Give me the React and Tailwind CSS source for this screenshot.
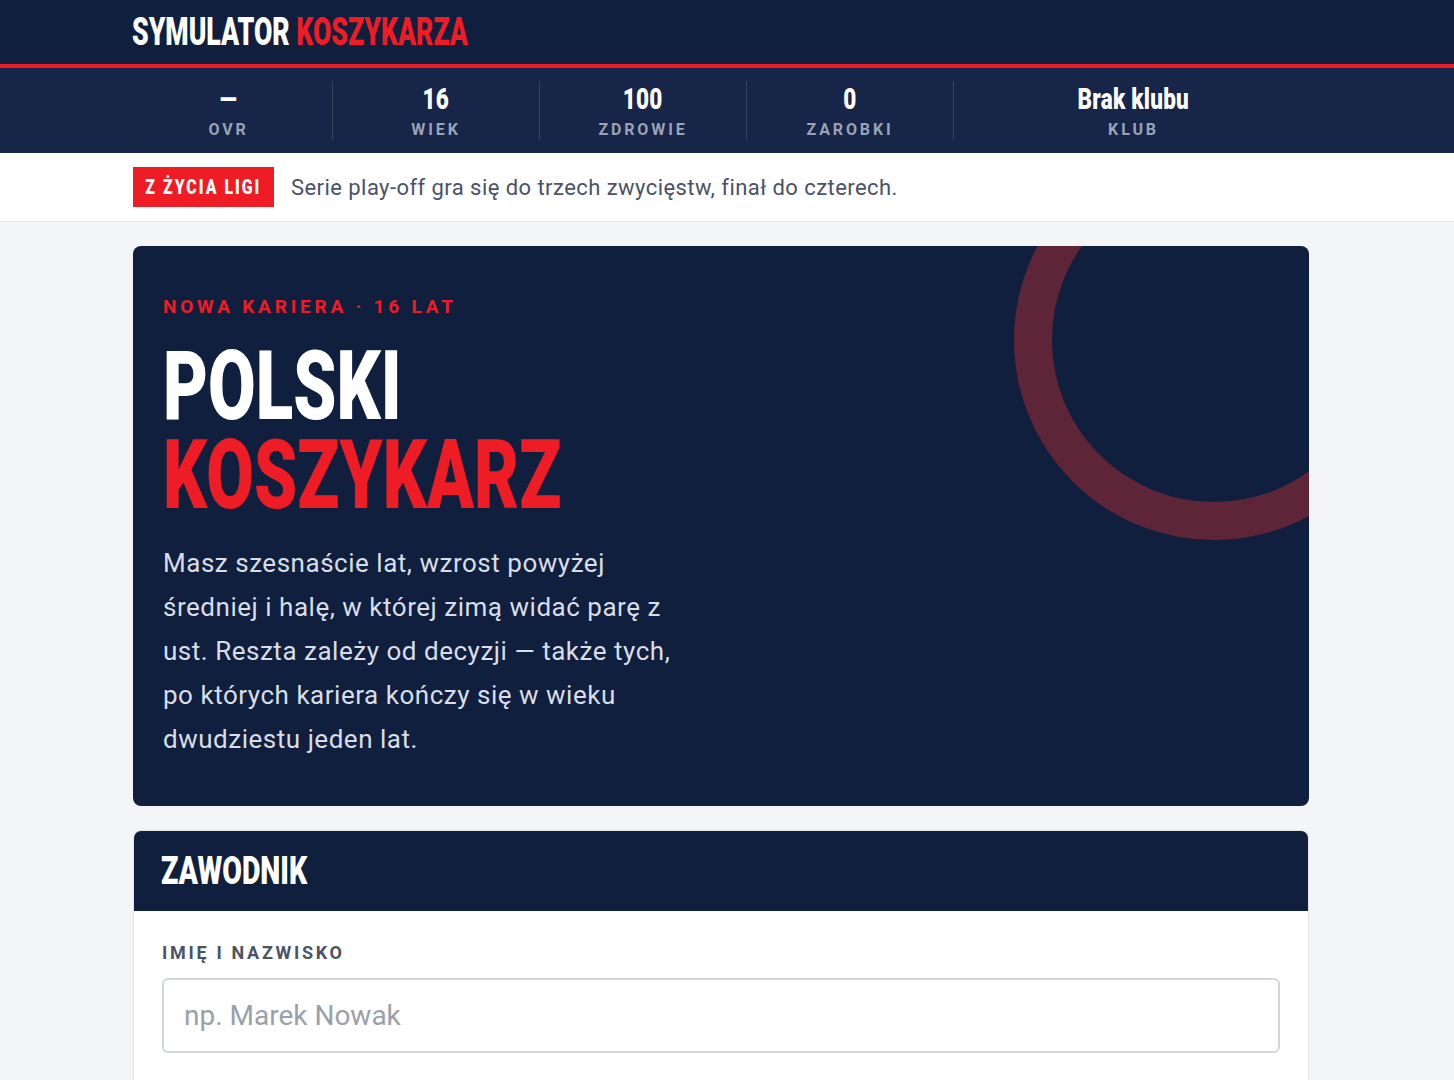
import React from 'react';

// Roboto Black squeezed horizontally stands in for a condensed display face
const cond = "font-['Roboto','Liberation_Sans',sans-serif] font-black inline-block whitespace-nowrap";
const body = "font-['Roboto','Liberation_Sans',sans-serif]";

const stats = [
  { value: '—', label: 'OVR', w: 'w-[207px]' },
  { value: '16', label: 'WIEK', w: 'w-[207px]' },
  { value: '100', label: 'ZDROWIE', w: 'w-[207px]' },
  { value: '0', label: 'ZAROBKI', w: 'w-[207px]' },
  { value: 'Brak klubu', label: 'KLUB', w: 'w-[360px]' },
];

const App = () => {
  return (
    <div className={`min-h-screen bg-[#f4f5f7] ${body}`}>
      {/* Header */}
      <header className="bg-[#0f1f3d] border-b-4 border-[#ee1c25]">
        <div className="h-16 flex items-center pl-[132px]">
          <h1 className={`${cond} scale-x-[0.70] origin-left text-[38px] text-white leading-none`}>
            SYMULATOR <span className="text-[#ee1c25]">KOSZYKARZA</span>
          </h1>
        </div>
      </header>

      {/* Stats */}
      <div className="bg-[#172548] h-[85px] flex pl-[125px]">
        {stats.map((s, i) => (
          <div
            key={s.label}
            className={`${s.w} flex flex-col items-center justify-center my-[13px] ${i > 0 ? 'border-l border-[#34435f]' : ''}`}
          >
            <span className={`${cond} scale-x-[0.75] origin-center text-[30px] tracking-[0.01em] text-white leading-none`}>{s.value}</span>
            <span className="mt-[8px] text-[16px] font-bold tracking-[0.18em] text-[#9aa2b3] leading-none">{s.label}</span>
          </div>
        ))}
      </div>

      {/* News ticker */}
      <div className="bg-white border-b border-[#e3e5ea] h-[69px] flex items-center pl-[133px]">
        <span className="bg-[#ee1c25] w-[141px] h-10 flex items-center justify-center shrink-0">
          <span className={`${cond} scale-x-[0.75] origin-center text-white text-[21px] tracking-[0.13em] leading-none`}>
            Z ŻYCIA LIGI
          </span>
        </span>
        <span className="ml-[17px] text-[22px] tracking-[0.02em] text-[#4a5266]">
          Serie play-off gra się do trzech zwycięstw, finał do czterech.
        </span>
      </div>

      <main className="pl-[133px] pt-6 w-[1309px]">
        {/* Hero */}
        <section className="relative overflow-hidden rounded-lg bg-[#0f1f3d] h-[560px] px-[30px] pt-[51px]">
          <div className="absolute -top-[106px] left-[881px] w-[400px] h-[400px] rounded-full border-[38px] border-[#5e2438]" />
          <p className="relative text-[19px] font-bold tracking-[0.2em] text-[#ee1c25] leading-none">
            NOWA KARIERA · 16 LAT
          </p>
          <h2 className={`relative ${cond} scale-x-[0.72] origin-left mt-[26px] text-[96px] leading-[0.93] text-white`}>
            POLSKI
            <br />
            <span className="text-[#ee1c25]">KOSZYKARZ</span>
          </h2>
          <p className="relative mt-[20px] w-[535px] text-[26px] leading-[44px] tracking-[0.02em] text-[#d9dde6]">
            Masz szesnaście lat, wzrost powyżej średniej i halę, w której zimą widać parę z ust. Reszta zależy od decyzji — także tych, po których kariera kończy się w wieku dwudziestu jeden lat.
          </p>
        </section>

        {/* Player */}
        <section className="mt-6 rounded-t-lg border border-[#e3e5ea] bg-white overflow-hidden">
          <div className="bg-[#0f1f3d] h-20 flex items-center px-[27px]">
            <h3 className={`${cond} scale-x-[0.75] origin-left text-[38px] text-white leading-none`}>ZAWODNIK</h3>
          </div>
          <div className="px-[28px] pt-[33px] pb-10">
            <label className="block text-[18px] font-bold tracking-[0.15em] text-[#4b5366] leading-none">
              IMIĘ I NAZWISKO
            </label>
            <input
              type="text"
              placeholder="np. Marek Nowak"
              className="mt-[16px] w-full h-[75px] rounded-md border-2 border-[#d3d6dc] px-[20px] text-[28px] text-[#1f2937] placeholder:text-[#9aa0ab] outline-none"
            />
          </div>
        </section>
      </main>
    </div>
  );
};

export default App;
